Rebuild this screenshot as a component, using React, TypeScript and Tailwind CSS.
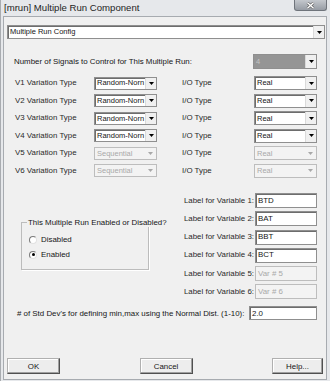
import React from "react";
import clsx from "clsx";

function Arrow({ disabled }: { disabled?: boolean }) {
  return (
    <svg width="5" height="3" viewBox="0 0 5 3">
      <path d="M0 0H5L2.5 3Z" fill={disabled ? "#a8a8a8" : "#000"} />
    </svg>
  );
}

function Combo({
  text,
  className,
  disabled,
  hl,
}: {
  text: string;
  className?: string;
  disabled?: boolean;
  hl?: boolean;
}) {
  return (
    <div
      className={clsx(
        "flex border",
        disabled
          ? "border-[#bdbdbd] bg-[#f3f3f3]"
          : "border-[#8f8f8f] bg-white shadow-[inset_1px_1px_0_#6d6d6d]",
        className
      )}
    >
      <div
        className={clsx(
          "flex-1 min-w-0 overflow-hidden whitespace-nowrap pl-[2px] flex items-center text-[7.5px]",
          hl && "bg-[#959595] text-[#c4c4c4]",
          disabled && "text-[#a9a9a9]"
        )}
      >
        {text}
      </div>
      <div
        className={clsx(
          "w-[11px] shrink-0 flex items-center justify-center",
          disabled ? "bg-[#f3f3f3]" : "bg-[#f0f0f0] border-l border-[#dadada]"
        )}
      >
        <Arrow disabled={disabled} />
      </div>
    </div>
  );
}

function TextBox({ text, disabled, className }: { text: string; disabled?: boolean; className?: string }) {
  return (
    <div
      className={clsx(
        "flex items-center border pl-[2px] whitespace-nowrap overflow-hidden",
        disabled
          ? "border-[#bdbdbd] bg-[#f3f3f3] text-[#a9a9a9]"
          : "border-[#8f8f8f] bg-white shadow-[inset_1px_1px_0_#6d6d6d]",
        className
      )}
    >
      {text}
    </div>
  );
}

function Btn({ label, className }: { label: string; className?: string }) {
  return (
    <div
      className={clsx(
        "h-[16px] flex items-center justify-center bg-[#ededed] border border-[#b0b0b0] border-b-[#505050] border-r-[#505050] shadow-[inset_-1px_-1px_0_#a0a0a0,inset_1px_1px_0_#ffffff]",
        className
      )}
    >
      {label}
    </div>
  );
}

function Radio({ checked }: { checked?: boolean }) {
  return (
    <div className="w-[8px] h-[8px] rounded-full border border-[#7a7a7a] border-b-[#e2e2e2] border-r-[#e2e2e2] bg-white flex items-center justify-center">
      {checked && <div className="w-[3px] h-[3px] rounded-full bg-black" />}
    </div>
  );
}

export default function App() {
  const rows = [
    { v: "V1 Variation Type", t: "Random-Norn", d: false },
    { v: "V2 Variation Type", t: "Random-Norn", d: false },
    { v: "V3 Variation Type", t: "Random-Norn", d: false },
    { v: "V4 Variation Type", t: "Random-Norn", d: false },
    { v: "V5 Variation Type", t: "Sequential", d: true },
    { v: "V6 Variation Type", t: "Sequential", d: true },
  ];
  const labels = [
    { l: "Label for Variable 1:", t: "BTD", d: false },
    { l: "Label for Variable 2:", t: "BAT", d: false },
    { l: "Label for Variable 3:", t: "BBT", d: false },
    { l: "Label for Variable 4:", t: "BCT", d: false },
    { l: "Label for Variable 5:", t: "Var # 5", d: true },
    { l: "Label for Variable 6:", t: "Var # 6", d: true },
  ];
  return (
    <div className="w-[330px] h-[381px] bg-[#e6e8eb] flex flex-col font-['Liberation_Sans',Arial,sans-serif] text-[7.9px] text-[#161616] border-l border-[#a9acb0] overflow-hidden">
      {/* title bar */}
      <div className="h-[16px] flex items-start shrink-0">
        <div className="pl-[3px] pt-[1px] leading-[13px] text-[9.6px] text-[#1e1e1e] whitespace-nowrap">
          [mrun] Multiple Run Component
        </div>
        <div className="ml-auto mr-[3px] w-[33px] h-[11px] rounded-b-[3px] border border-t-0 border-[#6f747b] bg-gradient-to-b from-[#c4c8cd] to-[#979ca4] flex items-center justify-center">
          <svg width="9" height="7" viewBox="0 0 9 7">
            <path d="M1.5 0.8L7.5 6.2M7.5 0.8L1.5 6.2" stroke="#555" strokeWidth="2.6" />
            <path d="M1.5 0.8L7.5 6.2M7.5 0.8L1.5 6.2" stroke="#fff" strokeWidth="1.5" />
          </svg>
        </div>
      </div>

      {/* client */}
      <div className="ml-[2px] w-[324px] h-[364px] border border-[#a7abb0] bg-[#f0f0f0] flex flex-col">
        <Combo text="Multiple Run Config" className="ml-[3px] mt-[8px] w-[318px] h-[14px]" />

        <div className="flex items-center pl-[10px] mt-[15px] h-[15px]">
          <div className="w-[239px] whitespace-nowrap">Number of Signals to Control for This Multiple Run:</div>
          <Combo text="4" hl className="w-[64px] h-[15px]" />
        </div>

        <div className="flex flex-col gap-[3.6px] mt-[7px]">
          {rows.map((r, i) => (
            <div key={i} className="flex items-center pl-[11px] h-[14px]">
              <div className="w-[79px] whitespace-nowrap text-[#2a2a2a]">{r.v}</div>
              <Combo text={r.t} disabled={r.d} className="w-[63px] h-[13px]" />
              <div className="ml-[25px] w-[72px] whitespace-nowrap text-[#2a2a2a]">I/O Type</div>
              <Combo text="Real" disabled={r.d} className="w-[63px] h-[14px]" />
            </div>
          ))}
        </div>

        <div className="flex mt-[15px]">
          <div className="ml-[17px] mt-[29px] w-[128px] h-[48px] relative border border-[#bcbcbc] shadow-[1px_1px_0_#ffffff] flex flex-col pl-[7px] pt-[13px] gap-[7px]">
            <div className="absolute left-[5px] top-[-5px] leading-[9px] bg-[#f0f0f0] px-[1px] whitespace-nowrap">
              This Multiple Run Enabled or Disabled?
            </div>
            <div className="flex items-center gap-[4px] h-[8px]">
              <Radio />
              <span>Disabled</span>
            </div>
            <div className="flex items-center gap-[4px] h-[8px]">
              <Radio checked />
              <span>Enabled</span>
            </div>
          </div>
          <div className="flex-1 flex flex-col items-end pr-[9px] gap-[3.3px]">
            {labels.map((l, i) => (
              <div key={i} className="flex items-center h-[15px]">
                <div className="whitespace-nowrap text-[#2a2a2a]">{l.l}</div>
                <TextBox text={l.t} disabled={l.d} className="ml-[1px] w-[62px] h-[15px]" />
              </div>
            ))}
          </div>
        </div>

        <div className="flex items-center pl-[13px] mt-[7px] h-[14px]">
          <div className="w-[232px] whitespace-nowrap">
            # of Std Dev's for defining min,max using the Normal Dist. (1-10):
          </div>
          <TextBox text="2.0" className="w-[68px] h-[14px]" />
        </div>

        <div className="flex justify-between px-[3px] mt-[38px]">
          <Btn label="OK" className="w-[53px]" />
          <Btn label="Cancel" className="w-[53px]" />
          <Btn label="Help..." className="w-[51px]" />
        </div>
      </div>
    </div>
  );
}
